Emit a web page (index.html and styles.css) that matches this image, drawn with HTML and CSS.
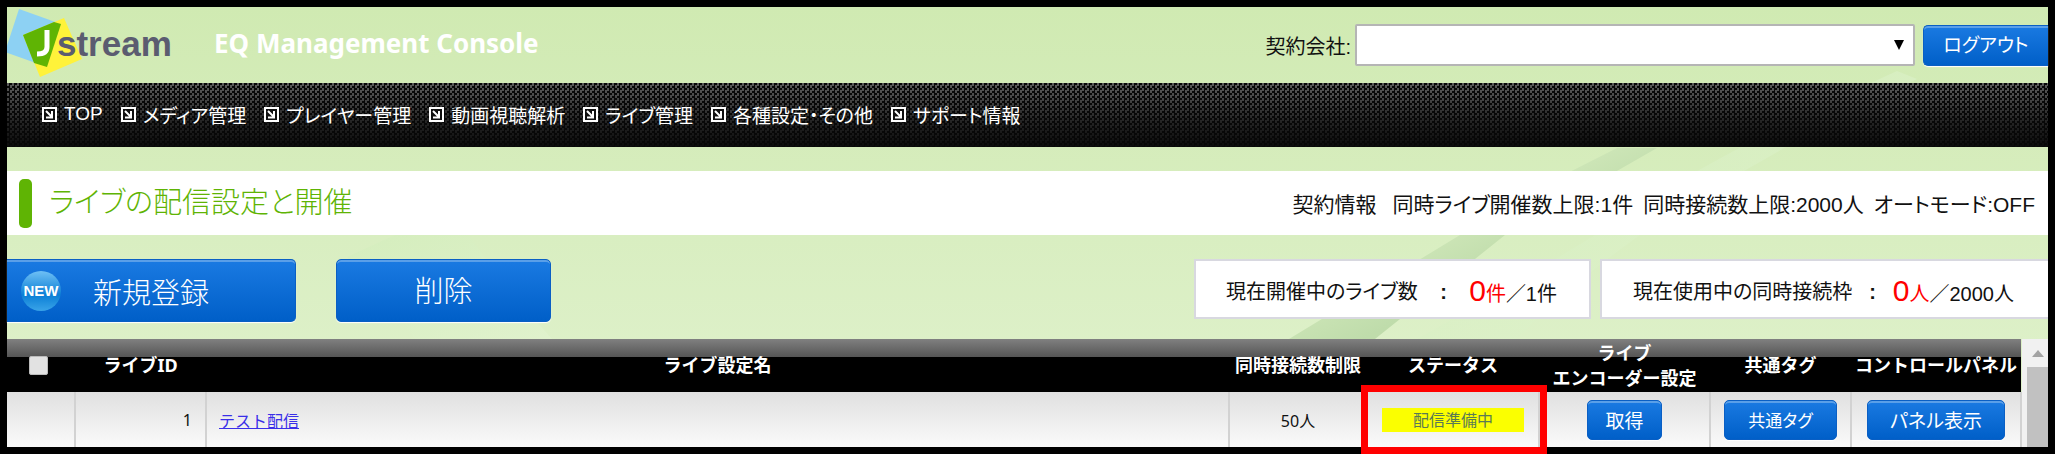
FILE: index.html
```
<!DOCTYPE html>
<html lang="ja">

<head>
    <meta charset="UTF-8">
    <meta name="viewport" content="width=device-width, initial-scale=1.0">
    <title>EQ Management Console</title>
    <link rel="stylesheet" href="styles.css">
</head>

<body>
    <div class="page">
        <svg class="leaves" viewBox="0 0 2041 332" preserveAspectRatio="none" aria-hidden="true">
            <defs>
                <linearGradient id="dark" x1="0" y1="0" x2="1" y2="1">
                    <stop offset="0.3" stop-color="#d8edc0" />
                    <stop offset="0.6" stop-color="#bfdcab" />
                </linearGradient>
                <linearGradient id="light" x1="0" y1="0" x2="1" y2="1">
                    <stop offset="0" stop-color="#d2edbb" />
                    <stop offset="1" stop-color="#e2f3d0" />
                </linearGradient>
            </defs>
            <path d="M1282 332 L1453 228 Q1530 180 1610 141 L1650 141 Q1575 184 1498 228 L1368 332 Z" fill="url(#dark)" />
            <path d="M1410 332 Q1520 270 1588 228 Q1690 155 1890 64 L1910 72 Q1760 145 1633 228 Q1560 280 1510 332 Z" fill="url(#light)" opacity=".7" />
            <path d="M388 228 H462 Q490 270 545 332 H408 Q370 280 340 250 Z" fill="url(#light)" opacity=".6" />
        </svg>

        <header class="header">
            <svg class="logo" width="166" height="76" viewBox="7 7 166 76" role="img" aria-label="Jstream">
                <polygon points="19,9 61,24 47,67 5,52" fill="#8dd1f3" />
                <polygon points="64,18 82,59 40,77 23,35" fill="#fff23a" />
                <polygon points="23,35 54,22 61,24 47,67 34,63" fill="#5fb404" />
                <path d="M47 30 V47 Q47 54 37 54" fill="none" stroke="#fff" stroke-width="5" />
                <text x="57" y="56" class="logo-text">stream</text>
            </svg>
            <h1 class="site-name">EQ Management Console</h1>
            <div class="account">
                <label for="company">契約会社:</label>
                <div class="select-wrap">
                    <select id="company">
                        <option></option>
                    </select>
                </div>
                <button type="button" class="btn btn-logout">ログアウト</button>
            </div>
        </header>

        <nav class="nav">
            <a href="#"><svg viewBox="0 0 15 15"><path d="M1 1H14V14H1Z M4 4L10 10 M10 4V10.5H4" /></svg>TOP</a>
            <a href="#"><svg viewBox="0 0 15 15"><path d="M1 1H14V14H1Z M4 4L10 10 M10 4V10.5H4" /></svg>メディア管理</a>
            <a href="#"><svg viewBox="0 0 15 15"><path d="M1 1H14V14H1Z M4 4L10 10 M10 4V10.5H4" /></svg>プレイヤー管理</a>
            <a href="#"><svg viewBox="0 0 15 15"><path d="M1 1H14V14H1Z M4 4L10 10 M10 4V10.5H4" /></svg>動画視聴解析</a>
            <a href="#"><svg viewBox="0 0 15 15"><path d="M1 1H14V14H1Z M4 4L10 10 M10 4V10.5H4" /></svg>ライブ管理</a>
            <a href="#"><svg viewBox="0 0 15 15"><path d="M1 1H14V14H1Z M4 4L10 10 M10 4V10.5H4" /></svg>各種設定・その他</a>
            <a href="#"><svg viewBox="0 0 15 15"><path d="M1 1H14V14H1Z M4 4L10 10 M10 4V10.5H4" /></svg>サポート情報</a>
        </nav>

        <section class="title-bar">
            <h2>ライブの配信設定と開催</h2>
            <div class="contract">
                <h3>契約情報</h3>
                <span>同時ライブ開催数上限:1件</span>
                <span>同時接続数上限:2000人</span>
                <span>オートモード:OFF</span>
            </div>
        </section>

        <section class="toolbar">
            <button type="button" class="btn btn-new"><span class="badge">NEW</span>新規登録</button>
            <button type="button" class="btn btn-delete">削除</button>
            <div class="count count-live">
                <span>現在開催中のライブ数</span><b class="colon">:</b><span><em><span class="zero">0</span>件</em>／1件</span>
            </div>
            <div class="count count-conn">
                <span>現在使用中の同時接続枠</span><b class="colon">:</b><span><em><span class="zero">0</span>人</em>／2000人</span>
            </div>
        </section>

        <section class="list">
            <table>
                <colgroup>
                    <col class="col-check">
                    <col class="col-id">
                    <col>
                    <col class="col-limit">
                    <col class="col-status">
                    <col class="col-encoder">
                    <col class="col-tag">
                    <col class="col-panel">
                </colgroup>
                <thead>
                    <tr>
                        <th><input type="checkbox" aria-label="すべて選択"></th>
                        <th>ライブID</th>
                        <th>ライブ設定名</th>
                        <th>同時接続数制限</th>
                        <th>ステータス</th>
                        <th>ライブ<br>エンコーダー設定</th>
                        <th>共通タグ</th>
                        <th>コントロールパネル</th>
                    </tr>
                </thead>
                <tbody>
                    <tr>
                        <td></td>
                        <td class="num">1</td>
                        <td class="name"><a href="#">テスト配信</a></td>
                        <td>50人</td>
                        <td class="marked"><span class="status">配信準備中</span></td>
                        <td><button type="button" class="btn btn-small btn-get">取得</button></td>
                        <td><button type="button" class="btn btn-small btn-tag">共通タグ</button></td>
                        <td><button type="button" class="btn btn-small btn-panel">パネル表示</button></td>
                    </tr>
                </tbody>
            </table>
            <div class="scrollbar"><span class="arrow"></span><span class="thumb"></span></div>
        </section>
    </div>
</body>

</html>
```
FILE: styles.css
```
* {
    box-sizing: border-box;
}

body {
    margin: 0;
    padding: 7px;
    background: #000;
    font-family: "Liberation Sans", "Noto Sans CJK JP", sans-serif;
    font-feature-settings: "palt";
    font-size: 20px;
    color: #111;
}

h1,
h2,
h3 {
    margin: 0;
    font-weight: normal;
}

button,
select {
    font-family: inherit;
    font-feature-settings: inherit;
}

.page {
    position: relative;
    background: linear-gradient(#d0eab2, #ddf0c8 340px);
}

/* leaf decoration behind the content */
.leaves {
    position: absolute;
    top: 0;
    left: 0;
    width: 100%;
    height: 332px;
}

.header,
.nav,
.title-bar,
.toolbar,
.list {
    position: relative;
    display: flex;
    align-items: center;
}

.header {
    height: 76px;
}

.logo-text {
    font: bold 35px "Liberation Sans", sans-serif;
    fill: #5b5c70;
}

.site-name {
    margin-left: 41px;
    font: bold 26px "Noto Sans", sans-serif;
    line-height: 32px;
    padding-bottom: 4px;
    color: #fff;
}

.account {
    display: flex;
    align-items: center;
    margin-left: auto;
    height: 42px;
}

.select-wrap {
    position: relative;
    margin: 0 8px 0 4px;
}

.select-wrap::after {
    content: "";
    position: absolute;
    top: 16px;
    right: 11px;
    border: 5px solid transparent;
    border-top: 10px solid #000;
    border-bottom: 0;
}

select {
    display: block;
    width: 560px;
    height: 42px;
    border: 2px solid #b5b5b5;
    border-radius: 2px;
    background: #fff;
    appearance: none;
}

.btn {
    border: 1px solid #0a5fc4;
    border-radius: 5px;
    background: linear-gradient(#1a7ae2, #005fc8);
    box-shadow: inset 0 3px 0 -1px #5a9fe8, 0 1px 1px #fff;
    color: #fff;
    cursor: pointer;
}

.btn-logout {
    width: 125px;
    height: 41px;
    padding: 0 0 4px;
    border-right: 0;
    border-radius: 5px 0 0 5px;
    font-size: 19px;
}

.nav {
    gap: 18px;
    height: 64px;
    padding: 0 35px 2px;
    background:
        repeating-conic-gradient(#080808 0 25%, transparent 0 50%) 0 0 / 5px 5px,
        linear-gradient(#5c5c5c, #242424 60%, #0c0c0c);
}

.nav a {
    display: flex;
    align-items: center;
    gap: 7px;
    color: #fff;
    font-size: 19px;
    text-decoration: none;
}

.nav svg {
    width: 15px;
    height: 15px;
    fill: #111;
    stroke: #fff;
    stroke-width: 2;
}

.title-bar {
    justify-content: space-between;
    height: 64px;
    margin: 24px 0;
    padding: 0 13px 0 12px;
    background: #fff;
}

h2 {
    display: flex;
    align-items: center;
    gap: 17px;
    font-size: 29px;
    font-weight: 300;
    line-height: 49px;
    color: #5fb404;
}

h2::before {
    content: "";
    width: 13px;
    height: 49px;
    border-radius: 5px;
    background: #5fb404;
}

.contract {
    display: flex;
    gap: 10px;
    font-size: 21px;
}

.contract h3 {
    margin-right: 6px;
    font-size: 21px;
}

.toolbar {
    align-items: flex-start;
    height: 80px;
}

.btn-new,
.btn-delete {
    display: flex;
    align-items: center;
    height: 63px;
    padding: 0 14px 4px;
    font-size: 29px;
    font-weight: 300;
}

.btn-new {
    gap: 32px;
    width: 289px;
    padding-bottom: 0;
    border-left: 0;
    border-radius: 0 5px 5px 0;
}

.badge {
    width: 40px;
    border-radius: 50%;
    background: linear-gradient(#6fc0f5, #0b7fd6 60%, #3aa4e8);
    font-size: 15px;
    font-weight: bold;
    line-height: 40px;
    text-align: center;
}

.btn-delete {
    justify-content: center;
    width: 215px;
    margin-left: 40px;
}

.count {
    display: flex;
    align-items: center;
    justify-content: space-between;
    height: 60px;
    border: 2px solid #d8d8e0;
    background: #fff;
    font-size: 20px;
    line-height: 40px;
}

.count-live {
    width: 397px;
    margin-left: auto;
    padding: 6px 32px 0 30px;
}

.count-conn {
    width: 448px;
    margin-left: 9px;
    padding: 6px 34px 0 31px;
    border-right: 0;
}

.count em {
    color: #f00;
    font-style: normal;
}

.zero {
    font-size: 30px;
}

.list {
    align-items: stretch;
}

table {
    flex: 1;
    table-layout: fixed;
    border-collapse: collapse;
    background: linear-gradient(#e0e0e0, #fafafa) 0 53px / 100% 55px no-repeat;
    font-family: "Noto Sans", "Noto Sans CJK JP", sans-serif;
    font-feature-settings: normal;
}

.col-check {
    width: 68px;
}

.col-id {
    width: 131px;
}

.col-limit {
    width: 138px;
}

.col-status {
    width: 172px;
}

.col-encoder {
    width: 171px;
}

.col-tag {
    width: 141px;
}

.col-panel {
    width: 170px;
}

th {
    height: 53px;
    padding: 0;
    color: #fff;
    font-size: 18px;
    line-height: 25px;
    white-space: nowrap;
}

thead {
    background: linear-gradient(#808080, #555 18px, #000 18px);
}

th input {
    appearance: none;
    display: block;
    width: 19px;
    height: 19px;
    margin: 0 auto 0 22px;
    border: 1px solid #bbb;
    border-radius: 2px;
    background: #e2e2e2;
}

td {
    height: 55px;
    padding: 0;
    border-right: 2px solid #d2d2d2;
    font-size: 16px;
    text-align: center;
}

td.num {
    padding-right: 13px;
    text-align: right;
}

td.name {
    padding-left: 12px;
    text-align: left;
}

td a {
    color: #3a2fe8;
}

/* red frame round the status cell */
.marked {
    position: relative;
}

.marked::after {
    content: "";
    position: absolute;
    top: -7px;
    right: -9px;
    bottom: -7px;
    left: -7px;
    border: 7px solid #f00;
}

.status {
    display: block;
    margin: 0 14px;
    background: #fbff00;
    color: #5a7a55;
    line-height: 24px;
}

.btn-small {
    height: 40px;
    padding: 0;
    font-size: 19px;
    font-feature-settings: "palt";
}

.btn-get {
    width: 75px;
}

.btn-tag {
    width: 113px;
    font-size: 17px;
}

.btn-panel {
    width: 138px;
}

.scrollbar {
    display: flex;
    flex-direction: column;
    width: 26px;
    padding-left: 5px;
    background: #f1f1f1;
}

.arrow {
    margin: 11px auto 10px;
    border: 6px solid transparent;
    border-top: 0;
    border-bottom: 7px solid #a3a3a3;
}

.thumb {
    flex: 1;
    background: #c1c1c1;
}
```
